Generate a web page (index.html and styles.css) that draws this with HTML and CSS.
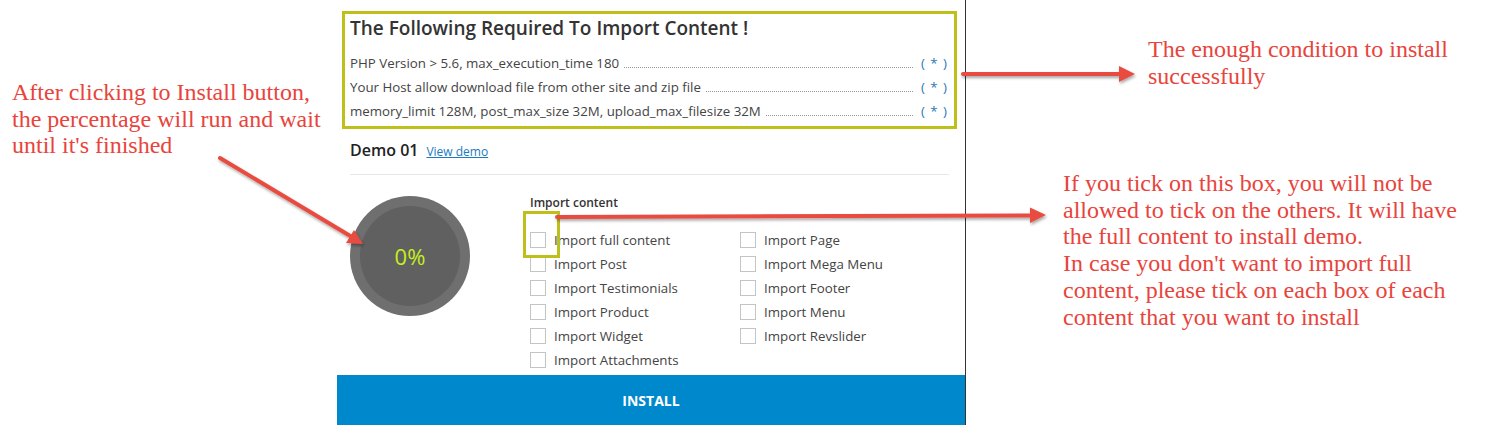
FILE: index.html
```html
<!DOCTYPE html>
<html>
<head>
<meta charset="utf-8">
<link rel="stylesheet" href="styles.css">
</head>
<body>
<div class="stage">
  <div class="panel">
    <div class="req">
      <h2 class="req-title">The Following Required To Import Content !</h2>
      <div class="req-row"><span class="req-text">PHP Version &gt; 5.6, max_execution_time 180</span><span class="leader"></span><span class="star">( * )</span></div>
      <div class="req-row"><span class="req-text">Your Host allow download file from other site and zip file</span><span class="leader"></span><span class="star">( * )</span></div>
      <div class="req-row"><span class="req-text">memory_limit 128M, post_max_size 32M, upload_max_filesize 32M</span><span class="leader"></span><span class="star">( * )</span></div>
    </div>
    <div class="demo-head">
      <span class="demo-name">Demo 01</span>
      <a class="demo-link" href="#">View demo</a>
    </div>
    <div class="demo-body">
      <div class="progress"><div class="progress-inner">0%</div></div>
      <div class="options">
        <div class="options-label">Import content</div>
        <div class="options-grid">
          <div class="col">
            <label class="opt first"><span class="box"></span>Import full content</label>
            <label class="opt"><span class="box"></span>Import Post</label>
            <label class="opt"><span class="box"></span>Import Testimonials</label>
            <label class="opt"><span class="box"></span>Import Product</label>
            <label class="opt"><span class="box"></span>Import Widget</label>
            <label class="opt"><span class="box"></span>Import Attachments</label>
          </div>
          <div class="col">
            <label class="opt"><span class="box"></span>Import Page</label>
            <label class="opt"><span class="box"></span>Import Mega Menu</label>
            <label class="opt"><span class="box"></span>Import Footer</label>
            <label class="opt"><span class="box"></span>Import Menu</label>
            <label class="opt"><span class="box"></span>Import Revslider</label>
          </div>
        </div>
      </div>
    </div>
    <div class="install">INSTALL</div>
  </div>

  <div class="note note-left">After clicking to Install button,<br>the percentage will run and wait<br>until it's finished</div>
  <div class="note note-top">The enough condition to install<br>successfully</div>
  <div class="note note-right">If you tick on this box, you will not be<br>allowed to tick on the others. It will have<br>the full content to install demo.<br>In case you don't want to import full<br>content, please tick on each box of each<br>content that you want to install</div>

  <svg class="arrows" width="1492" height="425" viewBox="0 0 1492 425">
    <defs>
      <filter id="sh" x="-10%" y="-50%" width="120%" height="200%">
        <feDropShadow dx="1" dy="2" stdDeviation="1.5" flood-color="#000" flood-opacity="0.35"/>
      </filter>
    </defs>
    <g filter="url(#sh)" fill="#e84c3f" stroke="#e84c3f">
      <line x1="220" y1="158" x2="352" y2="237" stroke-width="4" stroke-linecap="round"/>
      <polygon points="363,244 346,243 354,230" stroke="none"/>
      <line x1="963" y1="74" x2="1122" y2="74" stroke-width="4" stroke-linecap="round"/>
      <polygon points="1135,74 1119,66 1119,82" stroke="none"/>
      <line x1="557" y1="217" x2="1032" y2="215.5" stroke-width="4" stroke-linecap="round"/>
      <polygon points="1046,215 1030,207.5 1030,223" stroke="none"/>
    </g>
  </svg>
</div>
</body>
</html>
```

FILE: styles.css
```css
* { box-sizing: border-box; }
html, body { margin: 0; padding: 0; background: #fff; }
.stage {
  position: relative;
  width: 1492px;
  height: 425px;
  overflow: hidden;
  font-family: "Open Sans", "Noto Sans", sans-serif;
}
.panel {
  margin-left: 337px;
  width: 629px;
  height: 425px;
  border-right: 1px solid #333;
  display: flex;
  flex-direction: column;
  padding-top: 11px;
}
.req {
  margin: 0 8px 0 5px;
  border: 3px solid #bfbf1a;
  padding: 1px 6px 6px 5px;
  height: 118px;
}
.req-title {
  margin: 0;
  font-size: 19px;
  font-weight: 600;
  color: #333;
  line-height: 26px;
  height: 36px;
}
.req-row {
  display: flex;
  align-items: baseline;
  font-size: 13.3px;
  color: #444;
  line-height: 24px;
}
.leader {
  flex: 1;
  border-bottom: 1px dotted #999;
  margin: 0 8px 0 5px;
}
.star { color: #2a78b4; letter-spacing: 1px; }
.demo-head {
  margin: 10px 16px 0 13px;
  padding-bottom: 13px;
  border-bottom: 1px solid #e8e8e8;
  display: flex;
  align-items: baseline;
  gap: 8px;
}
.demo-name { font-size: 16px; font-weight: 600; color: #222; }
.demo-link { font-size: 12px; color: #1a7bc0; text-decoration: underline; }
.demo-body {
  display: flex;
  padding: 21px 0 0 13px;
  flex: 1;
}
.progress {
  width: 120px;
  height: 120px;
  border-radius: 50%;
  background: #6f6f6f;
  padding: 10px;
}
.progress-inner {
  width: 100%;
  height: 100%;
  border-radius: 50%;
  background: #606060;
  color: #c6ef1e;
  font-size: 22px;
  display: flex;
  align-items: center;
  justify-content: center;
}
.options { margin-left: 60px; }
.options-label {
  font-size: 12px;
  font-weight: 600;
  color: #333;
  line-height: 16px;
  margin-top: -1px;
  height: 33px;
}
.options-grid { display: flex; }
.col { width: 210px; display: flex; flex-direction: column; }
.opt {
  display: flex;
  align-items: center;
  height: 24px;
  font-size: 13.3px;
  color: #444;
}
.box {
  width: 16px;
  height: 16px;
  border: 1px solid #c4c4c4;
  background: #fff;
  margin-right: 8px;
  flex: none;
}
.first { position: relative; }
.first::before {
  content: "";
  position: absolute;
  left: -7px;
  top: -17px;
  width: 31px;
  height: 41px;
  border: 3px solid #bfbf1a;
}
.install {
  height: 50px;
  background: #0088cc;
  color: #fff;
  font-weight: 700;
  font-size: 14px;
  display: flex;
  align-items: center;
  justify-content: center;
  flex: none;
  margin-top: auto;
}
.note {
  position: absolute;
  font-family: "Liberation Serif", "Times New Roman", serif;
  color: #e8443c;
  font-size: 24px;
  line-height: 26.7px;
  white-space: nowrap;
}
.note-left { left: 12px; top: 79px; }
.note-top { left: 1148px; top: 36px; }
.note-right { left: 1063px; top: 170px; }
.arrows { position: absolute; left: 0; top: 0; pointer-events: none; }
```
